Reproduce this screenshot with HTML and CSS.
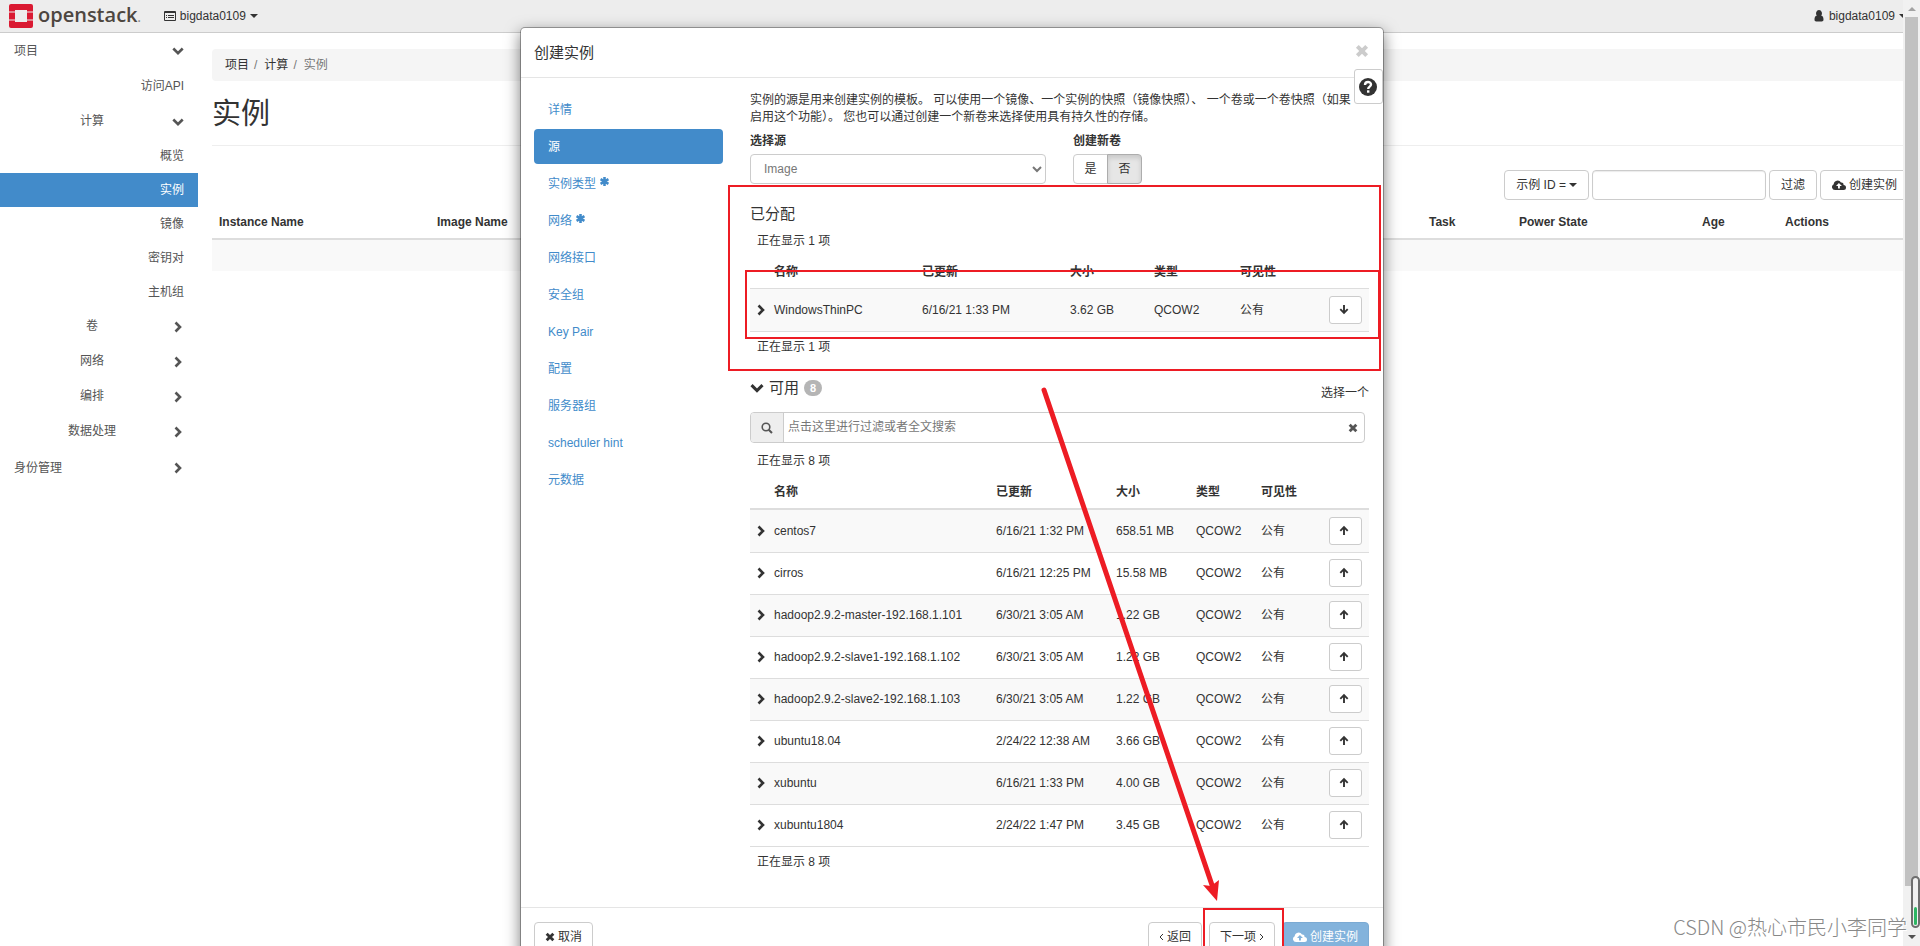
FILE: index.html
```html
<!DOCTYPE html>
<html lang="zh-CN">
<head>
<meta charset="utf-8">
<title>实例 - OpenStack Dashboard</title>
<link rel="stylesheet" href="styles.css">
</head>
<body>
<svg class="defs" aria-hidden="true">
  <symbol id="right" viewBox="0 0 12 12"><path d="M3.5 1.5 8 6l-4.500 4.500" fill="none" stroke="currentColor" stroke-width="2.600"/></symbol>
  <symbol id="down" viewBox="0 0 12 12"><path d="M1.300 3.500 6 8.200l4.700-4.700" fill="none" stroke="currentColor" stroke-width="2.600"/></symbol>
  <symbol id="times" viewBox="0 0 12 12"><path d="M2 2l8 8M10 2l-8 8" fill="none" stroke="currentColor" stroke-width="3.400"/></symbol>
  <symbol id="up-arrow" viewBox="0 0 12 12"><path d="M6 10V2.500M2.300 5.800 6 2.100l3.700 3.700" fill="none" stroke="currentColor" stroke-width="1.900"/></symbol>
  <symbol id="down-arrow" viewBox="0 0 12 12"><path d="M6 1v7.500M2.300 5.200 6 8.900l3.700-3.700" fill="none" stroke="currentColor" stroke-width="1.900"/></symbol>
  <symbol id="asterisk" viewBox="0 0 12 12"><path d="M6 1v10M1.700 3.500l8.600 5M10.300 3.500l-8.600 5" fill="none" stroke="currentColor" stroke-width="2.800"/></symbol>
  <symbol id="caret" viewBox="0 0 8 4"><path d="M0 0h8L4 4z" fill="currentColor"/></symbol>
  <symbol id="cloud" viewBox="0 0 14 10"><path fill="currentColor" fill-rule="evenodd" d="M3 10a3 3 0 0 1-1.300-5.700A3.900 3.900 0 0 1 9 2.600a2 2 0 0 1 2.500 2.400A2.500 2.500 0 0 1 11.500 10zM6.900 3 4 6h2v2.500h1.900V6h2z"/></symbol>
</svg>

<header class="navbar">
  <a class="brand" href="#" aria-label="openstack">
    <svg class="brand-mark" viewBox="0 0 24 24"><path fill="#da1a32" d="M2 0h20a2 2 0 0 1 2 2v5.500h-6V6H6v1.500H0V2a2 2 0 0 1 2-2zM0 8.500h6v7H0zM18 8.500h6v7h-6zM0 16.500h6V18h12v-1.500h6V22a2 2 0 0 1-2 2H2a2 2 0 0 1-2-2z"/></svg>
    <span class="brand-name">openstack<small>.</small></span>
  </a>
  <button class="nav-menu" type="button">
    <svg class="icon" viewBox="0 0 12 12"><path fill="none" stroke="currentColor" d="M.5 1.500h11v9H.5zM.5 2.500h11M2 5.500h1M4 5.500h6M2 7.500h1M4 7.500h6"/></svg>
    bigdata0109 <svg class="caret"><use href="#caret"/></svg>
  </button>
  <button class="nav-menu user" type="button">
    <svg class="icon" viewBox="0 0 12 12"><path fill="currentColor" d="M6 0a2.900 3.300 0 0 1 2.100 5.600C10 6 10.500 8 10.500 9.800c0 1-.8 1.700-1.700 1.700H3.200c-1 0-1.700-.7-1.700-1.700C1.500 8 2 6 3.900 5.600A2.900 3.300 0 0 1 6 0z"/></svg>
    bigdata0109 <svg class="caret"><use href="#caret"/></svg>
  </button>
</header>

<div class="page">
  <nav class="sidebar">
    <a class="top" href="#">项目<svg class="icon"><use href="#down"/></svg></a>
    <a class="group leaf" href="#">访问API</a>
    <a class="group" href="#"><span>计算</span><svg class="icon"><use href="#down"/></svg></a>
    <a class="leaf" href="#">概览</a>
    <a class="leaf active" href="#">实例</a>
    <a class="leaf" href="#">镜像</a>
    <a class="leaf" href="#">密钥对</a>
    <a class="leaf" href="#">主机组</a>
    <a class="group" href="#"><span>卷</span><svg class="icon"><use href="#right"/></svg></a>
    <a class="group" href="#"><span>网络</span><svg class="icon"><use href="#right"/></svg></a>
    <a class="group" href="#"><span>编排</span><svg class="icon"><use href="#right"/></svg></a>
    <a class="group" href="#"><span>数据处理</span><svg class="icon"><use href="#right"/></svg></a>
    <a class="top" href="#">身份管理<svg class="icon"><use href="#right"/></svg></a>
  </nav>
  <main class="main">
    <ol class="breadcrumb"><li><a href="#">项目</a></li><li><a href="#">计算</a></li><li>实例</li></ol>
    <h1>实例</h1>
    <div class="toolbar">
      <button class="btn" type="button">示例 ID = <svg class="caret"><use href="#caret"/></svg></button>
      <input class="filter" type="text" aria-label="过滤条件">
      <button class="btn" type="button">过滤</button>
      <button class="btn" type="button"><svg class="cloud"><use href="#cloud"/></svg> 创建实例</button>
    </div>
    <table class="instances">
      <colgroup><col class="c-name"><col><col class="c-task"><col class="c-power"><col class="c-age"><col class="c-actions"></colgroup>
      <thead><tr><th>Instance Name</th><th>Image Name</th><th>Task</th><th>Power State</th><th>Age</th><th>Actions</th></tr></thead>
      <tbody><tr><td colspan="6"></td></tr></tbody>
    </table>
  </main>
</div>

<div class="overlay">
  <section class="modal" role="dialog" aria-labelledby="modal-title">
    <header class="modal-header">
      <h2 id="modal-title">创建实例</h2>
      <button class="close" type="button" aria-label="关闭"><svg><use href="#times"/></svg></button>
    </header>
    <button class="help" type="button" aria-label="帮助">
      <svg viewBox="0 0 18 18"><circle cx="9" cy="9" r="9" fill="currentColor"/><path d="M6 7c0-4 6-3.800 6-.4C12 8.700 9.200 8.600 9.200 11" fill="none" stroke="#fff" stroke-width="2.400"/><path d="M8 12.300h2.400v2.400H8z" fill="#fff"/></svg>
    </button>
    <div class="modal-body">
      <nav class="steps">
        <a href="#">详情</a>
        <a class="active" href="#">源</a>
        <a href="#">实例类型 <svg><use href="#asterisk"/></svg></a>
        <a href="#">网络 <svg><use href="#asterisk"/></svg></a>
        <a href="#">网络接口</a>
        <a href="#">安全组</a>
        <a href="#">Key Pair</a>
        <a href="#">配置</a>
        <a href="#">服务器组</a>
        <a href="#">scheduler hint</a>
        <a href="#">元数据</a>
      </nav>
      <div class="source">
        <p class="intro">实例的源是用来创建实例的模板。 可以使用一个镜像、一个实例的快照（镜像快照）、 一个卷或一个卷快照（如果启用这个功能）。 您也可以通过创建一个新卷来选择使用具有持久性的存储。</p>
        <div class="fields">
          <div class="field wide">
            <label for="boot-source">选择源</label>
            <select id="boot-source"><option>Image</option></select>
          </div>
          <div class="field" role="group" aria-labelledby="new-volume">
            <span class="label" id="new-volume">创建新卷</span>
            <div class="toggle"><button type="button">是</button><button class="on" type="button" aria-pressed="true">否</button></div>
          </div>
        </div>

        <h3 class="allocated-title">已分配</h3>
        <p class="count">正在显示 1 项</p>
        <table class="images allocated">
          <colgroup><col class="a0"><col class="a1"><col class="a2"><col class="a3"><col class="a4"><col><col class="act"></colgroup>
          <thead><tr><th></th><th>名称</th><th>已更新</th><th>大小</th><th>类型</th><th>可见性</th><th></th></tr></thead>
          <tbody>
            <tr><td><svg class="icon"><use href="#right"/></svg></td><td>WindowsThinPC</td><td>6/16/21 1:33 PM</td><td>3.62 GB</td><td>QCOW2</td><td>公有</td><td><button class="move" type="button" aria-label="移除"><svg class="icon"><use href="#down-arrow"/></svg></button></td></tr>
          </tbody>
        </table>
        <p class="count below">正在显示 1 项</p>

        <div class="available-head">
          <h3><svg><use href="#down"/></svg>可用 <span class="badge">8</span></h3>
          <span>选择一个</span>
        </div>
        <div class="search">
          <span class="addon"><svg class="icon" viewBox="0 0 12 12"><circle cx="5" cy="5" r="3.800" fill="none" stroke="currentColor" stroke-width="1.600"/><path d="M7.700 7.700 11 11" stroke="currentColor" stroke-width="2"/></svg></span>
          <input type="text" aria-label="搜索" placeholder="点击这里进行过滤或者全文搜索">
          <button type="button" aria-label="清除"><svg><use href="#times"/></svg></button>
        </div>
        <p class="count">正在显示 8 项</p>
        <table class="images">
          <colgroup><col class="b0"><col class="b1"><col class="b2"><col class="b3"><col class="b4"><col><col class="act"></colgroup>
          <thead><tr><th></th><th>名称</th><th>已更新</th><th>大小</th><th>类型</th><th>可见性</th><th></th></tr></thead>
          <tbody>
            <tr><td><svg class="icon"><use href="#right"/></svg></td><td>centos7</td><td>6/16/21 1:32 PM</td><td>658.51 MB</td><td>QCOW2</td><td>公有</td><td><button class="move" type="button" aria-label="分配"><svg class="icon"><use href="#up-arrow"/></svg></button></td></tr>
            <tr><td><svg class="icon"><use href="#right"/></svg></td><td>cirros</td><td>6/16/21 12:25 PM</td><td>15.58 MB</td><td>QCOW2</td><td>公有</td><td><button class="move" type="button" aria-label="分配"><svg class="icon"><use href="#up-arrow"/></svg></button></td></tr>
            <tr><td><svg class="icon"><use href="#right"/></svg></td><td>hadoop2.9.2-master-192.168.1.101</td><td>6/30/21 3:05 AM</td><td>1.22 GB</td><td>QCOW2</td><td>公有</td><td><button class="move" type="button" aria-label="分配"><svg class="icon"><use href="#up-arrow"/></svg></button></td></tr>
            <tr><td><svg class="icon"><use href="#right"/></svg></td><td>hadoop2.9.2-slave1-192.168.1.102</td><td>6/30/21 3:05 AM</td><td>1.22 GB</td><td>QCOW2</td><td>公有</td><td><button class="move" type="button" aria-label="分配"><svg class="icon"><use href="#up-arrow"/></svg></button></td></tr>
            <tr><td><svg class="icon"><use href="#right"/></svg></td><td>hadoop2.9.2-slave2-192.168.1.103</td><td>6/30/21 3:05 AM</td><td>1.22 GB</td><td>QCOW2</td><td>公有</td><td><button class="move" type="button" aria-label="分配"><svg class="icon"><use href="#up-arrow"/></svg></button></td></tr>
            <tr><td><svg class="icon"><use href="#right"/></svg></td><td>ubuntu18.04</td><td>2/24/22 12:38 AM</td><td>3.66 GB</td><td>QCOW2</td><td>公有</td><td><button class="move" type="button" aria-label="分配"><svg class="icon"><use href="#up-arrow"/></svg></button></td></tr>
            <tr><td><svg class="icon"><use href="#right"/></svg></td><td>xubuntu</td><td>6/16/21 1:33 PM</td><td>4.00 GB</td><td>QCOW2</td><td>公有</td><td><button class="move" type="button" aria-label="分配"><svg class="icon"><use href="#up-arrow"/></svg></button></td></tr>
            <tr><td><svg class="icon"><use href="#right"/></svg></td><td>xubuntu1804</td><td>2/24/22 1:47 PM</td><td>3.45 GB</td><td>QCOW2</td><td>公有</td><td><button class="move" type="button" aria-label="分配"><svg class="icon"><use href="#up-arrow"/></svg></button></td></tr>
          </tbody>
        </table>
        <p class="count below">正在显示 8 项</p>
      </div>
    </div>
    <footer class="modal-footer">
      <button class="btn cancel" type="button"><svg class="small"><use href="#times"/></svg> 取消</button>
      <button class="btn" type="button"><svg class="angle" viewBox="0 0 5 8"><path d="M4 1 1 4l3 3" fill="none" stroke="currentColor"/></svg> 返回</button>
      <button class="btn next" type="button">下一项 <svg class="angle" viewBox="0 0 5 8"><path d="M1 1l3 3-3 3" fill="none" stroke="currentColor"/></svg></button>
      <button class="btn primary" type="button" disabled><svg class="cloud"><use href="#cloud"/></svg> 创建实例</button>
    </footer>
    <svg class="marks" viewBox="0 0 862 960" aria-hidden="true">
      <g fill="none" stroke="#ed1c24" stroke-width="2">
        <path d="M208 158h651v184H208z"/>
        <path d="M225 243h633v67H225z"/>
        <path d="M683 881h79v69h-79z"/>
        <path d="M523 362 692 860" stroke-width="5" stroke-linecap="round"/>
      </g>
      <path fill="#ed1c24" d="M696 873 682 857l8 1 8-6z"/>
    </svg>
  </section>
</div>

<div class="scrollbar" aria-hidden="true">
  <svg viewBox="0 0 8 4"><path d="M0 4h8L4 0z" fill="#a3a3a3"/></svg>
  <div class="thumb"></div>
  <svg viewBox="0 0 8 4"><path d="M0 0h8L4 4z" fill="#505050"/></svg>
</div>
<div class="meter" aria-hidden="true"><div></div></div>
<div class="watermark">CSDN @热心市民小李同学</div>
</body>
</html>
```
FILE: styles.css
```css
* { box-sizing: border-box; }
html, body { height: 100%; }
body {
  margin: 0;
  overflow: hidden;
  display: flex;
  flex-direction: column;
  background: #fff;
  color: #333;
  font: 12px/17px "Liberation Sans", "Noto Sans CJK SC", sans-serif;
}
button, input, select { font: inherit; color: inherit; }
button { cursor: pointer; }
a { color: inherit; text-decoration: none; }
h1, h2, h3, p, ol { margin: 0; padding: 0; font-weight: normal; }
.defs { position: absolute; width: 0; height: 0; }
.icon { width: 12px; height: 12px; flex: none; }
.caret { width: 8px; height: 4px; }
.cloud { width: 14px; height: 10px; }

.navbar {
  display: flex;
  align-items: center;
  gap: 23px;
  height: 33px;
  flex: none;
  padding: 0 13px 0 9px;
  background: #ededed;
  border-bottom: 1px solid #ccc;
}
.brand { display: flex; align-items: center; gap: 5px; }
.brand-mark { width: 24px; height: 24px; }
.brand-name { font: 600 20px/24px "Open Sans", sans-serif; color: #4d4640; }
.brand-name small { font-size: 12px; color: #888; }
.nav-menu {
  display: flex;
  align-items: center;
  gap: 4px;
  padding: 0;
  border: 0;
  background: none;
}
.user { margin-left: auto; }

.page { display: flex; flex: 1; min-height: 0; }
.sidebar { width: 198px; flex: none; color: #555; }
.sidebar a {
  display: flex;
  align-items: center;
  justify-content: space-between;
  height: 34px;
  padding: 0 14px;
}
.sidebar .top { height: 36px; }
.sidebar .group { height: 35px; }
.sidebar .group + .top { margin-top: 1px; }
.sidebar .group span { width: 156px; text-align: center; margin-right: -12px; }
.sidebar .leaf { justify-content: flex-end; }
.sidebar .active { background: #428bca; color: #fff; }

.main { flex: 1; min-width: 0; overflow: hidden; padding: 16px 11px 0 14px; }
.breadcrumb {
  display: flex;
  list-style: none;
  padding: 8px 13px 7px;
  background: #f5f5f5;
  border-radius: 4px;
  color: #777;
}
.breadcrumb a { color: #333; }
.breadcrumb li + li::before { content: "/"; padding: 0 7px 0 5px; }
.main h1 {
  font-size: 29px;
  line-height: 32px;
  padding: 17px 0 15px;
  border-bottom: 1px solid #eee;
}
.toolbar { display: flex; justify-content: flex-end; gap: 3px; padding-top: 24px; }
.btn {
  display: flex;
  align-items: center;
  gap: 3px;
  height: 30px;
  padding: 0 11px;
  border: 1px solid #ccc;
  border-radius: 4px;
  background: #fff;
  white-space: nowrap;
}
.filter {
  width: 174px;
  height: 30px;
  border: 1px solid #ccc;
  border-radius: 4px;
  box-shadow: inset 0 1px 1px rgba(0, 0, 0, .08);
}
table { width: 100%; border-collapse: separate; border-spacing: 0; table-layout: fixed; }
th, td { padding: 7px; text-align: left; white-space: nowrap; }
.instances { margin-top: 7px; }
.instances th { border-bottom: 2px solid #ddd; }
.instances td { height: 31px; background: #f9f9f9; }
.c-name { width: 218px; }
.c-task { width: 90px; }
.c-power { width: 183px; }
.c-age { width: 83px; }
.c-actions { width: 131px; }

.overlay { position: absolute; inset: 0 16px 0 0; overflow: hidden; }
.modal {
  position: relative;
  width: 864px;
  margin: 27px auto 0;
  background: #fff;
  background-clip: padding-box;
  border: 1px solid rgba(0, 0, 0, .3);
  border-radius: 5px;
  box-shadow: 0 5px 15px rgba(0, 0, 0, .5);
}
.modal-header {
  display: flex;
  justify-content: space-between;
  padding: 16px 14px 15px 13px;
  border-bottom: 1px solid #e5e5e5;
}
.modal-header h2, .source h3 { font-size: 15px; line-height: 18px; }
.close { height: 14px; padding: 0; border: 0; background: none; color: #ccc; }
.close svg { display: block; width: 14px; height: 14px; }
.help {
  position: absolute;
  top: 41px;
  right: 0;
  width: 29px;
  height: 35px;
  padding: 0 1px 0 0;
  border: 1px solid #ccc;
  border-radius: 3px;
  background: #fff;
}
.help svg { display: block; width: 18px; height: 18px; margin: auto; }
.modal-body { display: flex; gap: 27px; padding: 0 14px 29px 13px; }
.steps {
  display: flex;
  flex-direction: column;
  gap: 2px;
  width: 189px;
  flex: none;
  padding-top: 14px;
  color: #428bca;
}
.steps a {
  display: flex;
  align-items: flex-start;
  gap: 3px;
  height: 35px;
  padding: 10px 14px 8px;
  border-radius: 4px;
}
.steps .active { background: #428bca; color: #fff; }
.steps svg { width: 11px; height: 11px; }
.source { flex: 1; min-width: 0; padding-top: 14px; }
.intro { padding-right: 12px; }
.fields { display: flex; gap: 27px; padding-top: 7px; }
.field { display: flex; flex-direction: column; gap: 4px; }
.field label, .label { font-weight: bold; }
.wide { width: 296px; }
.field select {
  height: 30px;
  padding: 0 9px;
  border: 1px solid #ccc;
  border-radius: 4px;
  background: #fff;
  color: #777;
}
.toggle { display: flex; }
.toggle button {
  width: 35px;
  height: 30px;
  padding: 0;
  border: 1px solid #ccc;
  border-radius: 4px 0 0 4px;
  background: #fff;
}
.toggle .on {
  margin-left: -1px;
  border-color: #adadad;
  border-radius: 0 4px 4px 0;
  background: #e6e6e6;
  box-shadow: inset 0 3px 5px rgba(0, 0, 0, .13);
}
.source .allocated-title { margin-top: 21px; }
.count { padding: 10px 7px 7px; }
.count.below { padding: 7px; }
.images th { border-bottom: 2px solid #ddd; }
.images td { padding: 6px 7px 7px; border-top: 1px solid #ddd; }
.images tbody tr:first-child td { border-top: 0; padding-top: 7px; }
.images tbody tr:nth-child(odd) td { background: #f9f9f9; }
.images tbody tr:last-child td { border-bottom: 1px solid #ddd; }
.images.allocated th { border-bottom-width: 1px; }
.images th:nth-child(-n+2), .images td:nth-child(-n+2) { padding-right: 0; }
.images td:first-child { padding-left: 5px; }
.images td .icon { display: block; }
.move {
  display: flex;
  align-items: center;
  justify-content: center;
  width: 33px;
  height: 28px;
  padding: 0 3px 0 0;
  border: 1px solid #ccc;
  border-radius: 3px;
  background: #fff;
}
.a0, .b0 { width: 17px; }
.a1, .a2 { width: 148px; }
.a3 { width: 84px; }
.a4 { width: 86px; }
.b1 { width: 222px; }
.b2 { width: 120px; }
.b3 { width: 80px; }
.b4 { width: 65px; }
.act { width: 47px; }
.available-head { display: flex; align-items: center; justify-content: space-between; margin-top: 11px; }
.available-head h3 { display: flex; align-items: center; gap: 5px; }
.available-head h3 svg { width: 14px; height: 14px; }
.available-head > span { padding-top: 11px; }
.badge {
  padding: 0 6px;
  border-radius: 9px;
  background: #b5b5b5;
  color: #fff;
  font-size: 11px;
  line-height: 16px;
  font-weight: bold;
}
.search {
  display: flex;
  height: 31px;
  margin: 10px 4px 0 0;
  border: 1px solid #ccc;
  border-radius: 4px;
  color: #555;
}
.addon {
  display: flex;
  align-items: center;
  justify-content: center;
  width: 33px;
  background: #eee;
  border-right: 1px solid #ccc;
  border-radius: 3px 0 0 3px;
}
.search input { flex: 1; min-width: 0; padding: 0 4px; border: 0; background: none; }
.search input::placeholder { color: #777; }
.search button { padding: 0 6px; border: 0; background: none; }
.search button svg, .small { display: block; width: 10px; height: 10px; }
.modal-footer {
  display: flex;
  gap: 7px;
  padding: 14px 14px 14px 13px;
  border-top: 1px solid #e5e5e5;
}
.modal-footer .btn { padding: 0 10px; }
.cancel { margin-right: auto; }
.angle { width: 5px; height: 8px; }
.primary { border-color: #357ebd; background: #428bca; color: #fff; opacity: .65; }
.marks {
  position: absolute;
  left: 0;
  top: 0;
  width: 862px;
  height: 960px;
  pointer-events: none;
}

.scrollbar {
  position: absolute;
  inset: 0 0 0 auto;
  width: 17px;
  display: flex;
  flex-direction: column;
  align-items: center;
  gap: 6px;
  padding: 7px 0;
  background: #f1f1f1;
}
.scrollbar svg { width: 8px; height: 4px; flex: none; }
.thumb { width: 13px; flex: 1; margin-bottom: 43px; background: #c1c1c1; }
.meter {
  position: absolute;
  right: 0;
  bottom: 18px;
  width: 9px;
  height: 52px;
  padding: 29px 1px 0;
  border: 2px solid #6e6e6e;
  border-radius: 5px;
  background: #f1f1f1;
}
.meter div { height: 18px; border-radius: 2px; background: #2db563; }
.watermark {
  position: absolute;
  right: 13px;
  bottom: 5px;
  font: 300 20px/28px "Noto Sans CJK SC", sans-serif;
  color: #888;
  text-shadow: 1px 1px 0 #fff;
}
```
